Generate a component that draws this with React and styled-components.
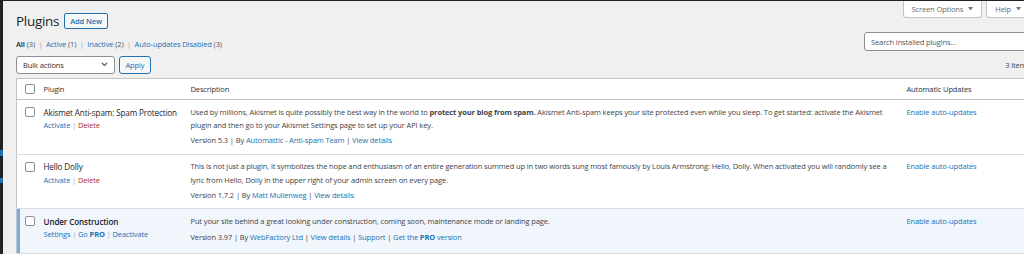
import React from 'react';
import styled, { createGlobalStyle } from 'styled-components';

const GlobalStyle = createGlobalStyle`
  html, body { margin: 0; padding: 0; }
  body {
    background: #f0f0f1;
    font-family: "Open Sans", "Noto Sans", sans-serif;
    font-size: 7.5px;
    letter-spacing: -0.12px;
    color: #3c434a;
    overflow: hidden;
  }
  * { box-sizing: border-box; }
`;

const Frame = styled.div`
  display: flex;
  width: 1024px;
  height: 254px;
  border-top: 1px solid #1d2327;
  overflow: hidden;
`;

const Sidebar = styled.div`
  flex: 0 0 3px;
  background: #1d2327;
  display: flex;
  flex-direction: column;
`;

const MenuMark = styled.div`
  height: ${(p) => p.$h}px;
  margin-top: ${(p) => p.$top}px;
  background: #2271b1;
`;

const Content = styled.div`
  flex: 0 0 1027px;
  padding-left: 13px;
`;

const Wrap = styled.div`
  width: 1014px;
`;

const Top = styled.div`
  display: flex;
  justify-content: space-between;
  align-items: flex-start;
`;

const LeftCol = styled.div`
  display: flex;
  flex-direction: column;
`;

const RightCol = styled.div`
  display: flex;
  flex-direction: column;
  align-items: flex-end;
`;

const HeadingRow = styled.div`
  display: flex;
  align-items: center;
  gap: 5px;
  margin-top: 12px;
  height: 16px;
`;

const Title = styled.h1`
  margin: 0;
  font-size: 13.5px;
  letter-spacing: -0.3px;
  font-weight: 400;
  color: #1d2327;
  line-height: 16px;
`;

const AddNew = styled.a`
  display: inline-flex;
  align-items: center;
  height: 16px;
  padding: 0 5px;
  border: 1px solid #2271b1;
  border-radius: 2px;
  background: #f6f7f7;
  color: #2271b1;
  font-weight: 600;
  text-decoration: none;
`;

const SubSub = styled.ul`
  list-style: none;
  margin: 9px 0 0;
  padding: 0;
  display: flex;
  line-height: 13px;
`;

const SubItem = styled.li`
  white-space: pre;
`;

const SubSep = styled.span`
  margin: 0 3.5px;
  color: #a7aaad;
`;

const SubLink = styled.a`
  color: ${(p) => (p.$current ? '#1d2327' : '#2271b1')};
  font-weight: ${(p) => (p.$current ? 600 : 400)};
  text-decoration: none;
`;

const Count = styled.span`
  color: #50575e;
  font-weight: 400;
`;

const Tabs = styled.div`
  display: flex;
  gap: 4px;
`;

const Tab = styled.button`
  display: flex;
  align-items: center;
  gap: 5px;
  height: 17px;
  padding: 0 8px;
  background: #fff;
  border: 1px solid #c3c4c7;
  border-top: 0;
  border-radius: 0 0 3px 3px;
  color: #646970;
  font: inherit;
  letter-spacing: inherit;
`;

const Search = styled.input`
  margin-top: 14px;
  width: 166px;
  height: 19px;
  border: 1px solid #8c8f94;
  border-radius: 3px;
  padding: 0 6px;
  font: inherit;
  letter-spacing: inherit;
  color: #2c3338;
  background: #fff;
  &::placeholder { color: #50575e; }
`;

const TableNav = styled.div`
  display: flex;
  align-items: center;
  gap: 4px;
  margin-top: 4px;
  height: 19px;
`;

const Select = styled.div`
  width: 99px;
  height: 18px;
  display: flex;
  align-items: center;
  justify-content: space-between;
  padding: 0 6px;
  border: 1px solid #8c8f94;
  border-radius: 3px;
  background: #fff;
  color: #2c3338;
`;

const Apply = styled.button`
  width: 32px;
  height: 18px;
  padding: 0;
  border: 1px solid #2271b1;
  border-radius: 3px;
  background: #f6f7f7;
  color: #2271b1;
  font: inherit;
  letter-spacing: inherit;
`;

const ItemCount = styled.span`
  margin-left: auto;
  color: #3c434a;
`;

const Table = styled.table`
  margin-top: 4px;
  width: 1014px;
  table-layout: fixed;
  border-collapse: collapse;
  border: 1px solid #c3c4c7;
  background: #fff;
`;

const Th = styled.th`
  text-align: left;
  font-weight: 400;
  color: #2c3338;
  padding: 3.5px 6px;
  line-height: 13px;
  border-bottom: 1px solid #c3c4c7;
`;

const CheckTh = styled.th`
  padding: 5px 0 0 8px;
  vertical-align: top;
  border-bottom: 1px solid #c3c4c7;
`;

const Tr = styled.tr`
  background: ${(p) => (p.$active ? '#f0f6fc' : '#fff')};
  border-bottom: 1px solid #dcdcde;
`;

const CheckTd = styled.td`
  padding: 7px 0 0 8px;
  vertical-align: top;
  box-shadow: ${(p) => (p.$active ? 'inset 3px 0 0 #72aee6' : 'none')};
`;

const Td = styled.td`
  padding: 5.5px 6px ${(p) => (p.$active ? 9 : 6)}px;
  vertical-align: top;
  line-height: 13.5px;
`;

const Box = styled.span`
  display: block;
  width: 10px;
  height: 10px;
  border: 1px solid #8c8f94;
  border-radius: 2px;
  background: #fff;
`;

const PluginName = styled.strong`
  display: block;
  font-size: 8.1px;
  font-weight: ${(p) => (p.$active ? 600 : 400)};
  color: #1d2327;
`;

const RowActions = styled.div`
  white-space: pre;
  color: #a7aaad;
`;

const Link = styled.a`
  color: ${(p) => (p.$danger ? '#b32d2e' : '#2271b1')};
  text-decoration: none;
`;

const Desc = styled.p`
  margin: 0;
`;

const Version = styled.div`
  margin-top: ${(p) => (p.$active ? 2.5 : 1.5)}px;
  white-space: pre;
`;

const Chevron = () => (
  <svg width="7" height="5" viewBox="0 0 7 5">
    <polyline points="1,1 3.5,3.5 6,1" fill="none" stroke="#50575e" strokeWidth="1.1" />
  </svg>
);

const Caret = () => (
  <svg width="5" height="4" viewBox="0 0 5 4">
    <polygon points="0,0 5,0 2.5,3.5" fill="#787c82" />
  </svg>
);

const plugins = [
  {
    name: 'Akismet Anti-spam: Spam Protection',
    actions: [{ t: 'Activate' }, { t: 'Delete', danger: true }],
    desc: (
      <>
        Used by millions, Akismet is quite possibly the best way in the world to{' '}
        <b>protect your blog from spam.</b> Akismet Anti-spam keeps your site protected even while you
        sleep. To get started: activate the Akismet plugin and then go to your Akismet Settings page to
        set up your API key.
      </>
    ),
    version: '5.3',
    author: 'Automattic - Anti-spam Team',
    links: ['View details'],
  },
  {
    name: 'Hello Dolly',
    actions: [{ t: 'Activate' }, { t: 'Delete', danger: true }],
    desc: (
      <>
        This is not just a plugin, it symbolizes the hope and enthusiasm of an entire generation summed
        up in two words sung most famously by Louis Armstrong: Hello, Dolly. When activated you will
        randomly see a lyric from Hello, Dolly in the upper right of your admin screen on every page.
      </>
    ),
    version: '1.7.2',
    author: 'Matt Mullenweg',
    links: ['View details'],
  },
  {
    name: 'Under Construction',
    active: true,
    actions: [
      { t: 'Settings' },
      { t: (<>Go <b>PRO</b></>) },
      { t: 'Deactivate' },
    ],
    desc: <>Put your site behind a great looking under construction, coming soon, maintenance mode or landing page.</>,
    version: '3.97',
    author: 'WebFactory Ltd',
    links: ['View details', 'Support', (<>Get the <b>PRO</b> version</>)],
  },
];

const subs = [
  { t: 'All', c: 3, current: true },
  { t: 'Active', c: 1 },
  { t: 'Inactive', c: 2 },
  { t: 'Auto-updates Disabled', c: 3 },
];

export default function App() {
  return (
    <>
      <GlobalStyle />
      <Frame>
        <Sidebar>
          <MenuMark $top={149} $h={6} />
          <MenuMark $top={22} $h={5} />
        </Sidebar>
        <Content>
          <Wrap>
            <Top>
              <LeftCol>
                <HeadingRow>
                  <Title>Plugins</Title>
                  <AddNew href="#">Add New</AddNew>
                </HeadingRow>
                <SubSub>
                  {subs.map((s, i) => (
                    <SubItem key={s.t}>
                      <SubLink href="#" $current={s.current}>
                        {s.t} <Count>({s.c})</Count>
                      </SubLink>
                      {i < subs.length - 1 && <SubSep>|</SubSep>}
                    </SubItem>
                  ))}
                </SubSub>
              </LeftCol>
              <RightCol>
                <Tabs>
                  <Tab>Screen Options <Caret /></Tab>
                  <Tab>Help <Caret /></Tab>
                </Tabs>
                <Search placeholder="Search installed plugins..." />
              </RightCol>
            </Top>
            <TableNav>
              <Select>
                <span>Bulk actions</span>
                <Chevron />
              </Select>
              <Apply>Apply</Apply>
              <ItemCount>3 items</ItemCount>
            </TableNav>
            <Table>
              <colgroup>
                <col style={{ width: 21 }} />
                <col style={{ width: 147 }} />
                <col style={{ width: 716 }} />
                <col style={{ width: 130 }} />
              </colgroup>
              <thead>
                <tr>
                  <CheckTh><Box /></CheckTh>
                  <Th>Plugin</Th>
                  <Th>Description</Th>
                  <Th>Automatic Updates</Th>
                </tr>
              </thead>
              <tbody>
                {plugins.map((p) => (
                  <Tr key={p.name} $active={p.active}>
                    <CheckTd $active={p.active}><Box /></CheckTd>
                    <Td $active={p.active}>
                      <PluginName $active={p.active}>{p.name}</PluginName>
                      <RowActions>
                        {p.actions.map((a, i) => (
                          <React.Fragment key={i}>
                            {i > 0 && ' | '}
                            <Link href="#" $danger={a.danger}>{a.t}</Link>
                          </React.Fragment>
                        ))}
                      </RowActions>
                    </Td>
                    <Td $active={p.active}>
                      <Desc>{p.desc}</Desc>
                      <Version $active={p.active}>
                        Version {p.version} | By <Link href="#">{p.author}</Link>
                        {p.links.map((l, i) => (
                          <React.Fragment key={i}>
                            {' | '}
                            <Link href="#">{l}</Link>
                          </React.Fragment>
                        ))}
                      </Version>
                    </Td>
                    <Td $active={p.active}>
                      <Link href="#">Enable auto-updates</Link>
                    </Td>
                  </Tr>
                ))}
              </tbody>
            </Table>
          </Wrap>
        </Content>
      </Frame>
    </>
  );
}
